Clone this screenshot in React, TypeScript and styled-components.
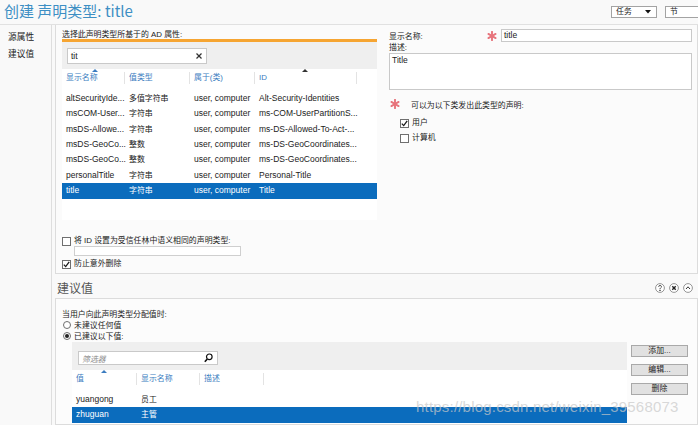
import React from "react";
import styled, { createGlobalStyle } from "styled-components";

const FONT = `"Liberation Sans", "Noto Sans CJK SC", sans-serif`;
const CJK = 7.9;
const LAT = 8.5;

const GlobalStyle = createGlobalStyle`
  html, body { margin: 0; padding: 0; background: #f9f9f9; }
  body { font-family: ${FONT}; color: #222; font-size: ${CJK}px; }
  * { box-sizing: border-box; }
`;

const Page = styled.div`
  position: relative;
  width: 698px;
  height: 425px;
  overflow: hidden;
  display: flex;
  flex-direction: column;
  background: #f9f9f9;
`;

const Header = styled.header`
  display: flex;
  justify-content: space-between;
  align-items: flex-start;
  height: 25px;
  flex-shrink: 0;
  border-bottom: 1px solid #e1e1e1;
`;

const Title = styled.h1`
  margin: 0;
  padding: 1px 0 0 4px;
  font-family: "Noto Sans CJK SC", "Liberation Sans", sans-serif;
  font-size: 15px;
  font-weight: 400;
  line-height: 20px;
  color: #3d8fc4;
`;

const HeaderTools = styled.div`
  display: flex;
  gap: 8px;
  margin: 6px -13px 0 0;
`;

const DropButton = styled.div`
  width: 46px;
  height: 12px;
  display: flex;
  align-items: center;
  justify-content: space-between;
  padding: 0 5px 0 4px;
  border: 1px solid #a3a3a3;
  background: #fff;
  font-size: ${CJK}px;
  line-height: 10px;
`;

const Body = styled.div`
  display: flex;
  flex: 1;
  min-height: 0;
`;

const Nav = styled.nav`
  width: 52px;
  flex-shrink: 0;
  border-right: 1px solid #dedede;
  padding-top: 4px;
`;

const NavItem = styled.div`
  padding-left: 8px;
  font-size: 8.7px;
  line-height: 17px;
  color: #222;
`;

const Main = styled.main`
  flex: 1;
  min-width: 0;
  margin-left: 3px;
  display: flex;
  flex-direction: column;
`;

const TopSection = styled.section`
  display: flex;
  height: 249px;
  flex-shrink: 0;
  border: 1px solid #dcdcdc;
  border-top: none;
  background: #fbfbfb;
`;

const LeftPane = styled.div`
  width: 321px;
  flex-shrink: 0;
  padding: 5px 0 0 6px;
  display: flex;
  flex-direction: column;
`;

const FieldLabel = styled.div`
  font-size: ${CJK}px;
  line-height: 9px;
  height: 9px;
  white-space: nowrap;
`;

const AccentBar = styled.div`
  height: 3px;
  background: #f6a532;
`;

const Toolbar = styled.div<{ $pt: number; $pl: number }>`
  background: #efefef;
  padding: ${(p) => p.$pt}px 0 5px ${(p) => p.$pl}px;
`;

const SearchBox = styled.div<{ $w: number; $h: number }>`
  width: ${(p) => p.$w}px;
  height: ${(p) => p.$h}px;
  display: flex;
  align-items: center;
  justify-content: space-between;
  padding: 0 4px 0 3px;
  border: 1px solid #c9c9c9;
  background: #fff;
`;

const SearchText = styled.span<{ $placeholder?: boolean }>`
  font-size: ${(p) => (p.$placeholder ? CJK : LAT)}px;
  color: ${(p) => (p.$placeholder ? "#8a8a8a" : "#222")};
  font-style: ${(p) => (p.$placeholder ? "italic" : "normal")};
`;

const List = styled.div<{ $h?: number }>`
  background: #fff;
  height: ${(p) => (p.$h ? `${p.$h}px` : "auto")};
  flex: ${(p) => (p.$h ? "none" : "1")};
`;

const HeadRow = styled.div<{ $cols: string }>`
  display: grid;
  grid-template-columns: ${(p) => p.$cols};
  height: 17px;
  padding-top: 1px;
`;

const HeadCell = styled.div<{ $sep?: boolean }>`
  position: relative;
  padding-left: 4px;
  font-size: ${CJK}px;
  line-height: 16px;
  color: #3b7cc0;
  white-space: nowrap;
  &::after {
    content: "";
    display: ${(p) => (p.$sep ? "block" : "none")};
    position: absolute;
    right: 0;
    top: 2px;
    bottom: 2px;
    width: 1px;
    background: #e3e3e3;
  }
`;

const SortMark = styled.span<{ $left: number; $color: string }>`
  position: absolute;
  top: -1px;
  left: ${(p) => p.$left}px;
  width: 0;
  height: 0;
  border-left: 3px solid transparent;
  border-right: 3px solid transparent;
  border-bottom: 3px solid ${(p) => p.$color};
`;

const Rows = styled.div`
  padding-top: 4.8px;
`;

const Row = styled.div<{ $cols: string; $sel?: boolean }>`
  display: grid;
  grid-template-columns: ${(p) => p.$cols};
  height: 15.4px;
  line-height: 15.4px;
  background: ${(p) => (p.$sel ? "#0b6cbd" : "transparent")};
  color: ${(p) => (p.$sel ? "#fff" : "#222")};
`;

const Cell = styled.div<{ $cjk?: boolean }>`
  padding-left: 4px;
  font-size: ${(p) => (p.$cjk ? CJK : LAT)}px;
  white-space: nowrap;
`;

const ChecksBlock = styled.div`
  margin-top: 16px;
  display: flex;
  flex-direction: column;
`;

const CheckRow = styled.label<{ $mt?: number; $indent?: number }>`
  display: flex;
  align-items: center;
  gap: 3px;
  height: 10px;
  margin-top: ${(p) => p.$mt ?? 0}px;
  margin-left: ${(p) => p.$indent ?? 0}px;
  font-size: ${CJK}px;
  line-height: 10px;
  white-space: nowrap;
`;

const Box = styled.span`
  width: 9px;
  height: 9px;
  flex-shrink: 0;
  display: flex;
  align-items: center;
  justify-content: center;
  border: 1px solid #6f6f6f;
  background: #fff;
`;

const SmallInput = styled.div`
  margin: 0 0 0 12px;
  width: 167px;
  height: 10px;
  border: 1px solid #cfcfcf;
  background: #fff;
`;

const RightPane = styled.div`
  flex: 1;
  padding: 4px 5px 0 12px;
  display: flex;
  flex-direction: column;
`;

const NameRow = styled.div`
  display: flex;
  align-items: center;
  height: 13px;
`;

const NameLabel = styled.span`
  width: 98px;
  font-size: ${CJK}px;
`;

const TextBox = styled.div`
  flex: 1;
  height: 13px;
  margin-left: 4px;
  padding-left: 2px;
  border: 1px solid #c9c9c9;
  background: #fff;
  font-size: ${LAT}px;
  line-height: 11px;
`;

const DescLabel = styled.div`
  margin-top: 1px;
  font-size: ${CJK}px;
  line-height: 10px;
`;

const TextArea = styled.div`
  height: 37px;
  padding: 1px 2px;
  border: 1px solid #c9c9c9;
  background: #fff;
  font-size: ${LAT}px;
  line-height: 10px;
`;

const RequiredRow = styled.div`
  display: flex;
  align-items: center;
  gap: 11px;
  height: 10px;
  margin: 9px 0 0 1px;
  font-size: ${CJK}px;
`;

const SectionHeader = styled.div`
  display: flex;
  justify-content: space-between;
  align-items: center;
  height: 24px;
  padding: 4px 5px 0 2px;
  flex-shrink: 0;
`;

const SectionTitle = styled.h2`
  margin: 0;
  font-size: 12px;
  font-weight: 400;
  line-height: 14px;
  color: #555;
  font-family: "Noto Sans CJK SC", "Liberation Sans", sans-serif;
`;

const IconRow = styled.div`
  display: flex;
  gap: 4px;
`;

const BottomBox = styled.section`
  flex: 1;
  border: 1px solid #dcdcdc;
  background: #fcfcfc;
  padding: 11px 0 0 6px;
  display: flex;
  flex-direction: column;
`;

const Prompt = styled.div`
  font-size: ${CJK}px;
  line-height: 9px;
  height: 9px;
`;

const RadioRow = styled.label`
  display: flex;
  align-items: center;
  gap: 3px;
  height: 11px;
  padding-left: 1px;
  font-size: ${CJK}px;
`;

const Radio = styled.span<{ $on?: boolean }>`
  width: 8px;
  height: 8px;
  border-radius: 50%;
  border: 1px solid #6f6f6f;
  background: #fff;
  display: flex;
  align-items: center;
  justify-content: center;
  &::after {
    content: "";
    display: ${(p) => (p.$on ? "block" : "none")};
    width: 4px;
    height: 4px;
    border-radius: 50%;
    background: #222;
  }
`;

const ValuesArea = styled.div`
  display: flex;
  gap: 4px;
  margin: 1px 0 0 10px;
  flex: 1;
`;

const ValuesTable = styled.div`
  width: 555px;
  display: flex;
  flex-direction: column;
`;

const ButtonCol = styled.div`
  display: flex;
  flex-direction: column;
  gap: 7px;
  padding-top: 3px;
  width: 57px;
`;

const ActionButton = styled.button`
  height: 12px;
  padding: 0;
  border: 1px solid #a9a9a9;
  background: #e1e1e1;
  font-family: ${FONT};
  font-size: ${CJK}px;
  line-height: 10px;
  color: #222;
`;

const Watermark = styled.div`
  position: absolute;
  left: 416px;
  top: 398px;
  font-family: "Liberation Sans", sans-serif;
  font-size: 15px;
  line-height: 18px;
  letter-spacing: 0.2px;
  color: rgba(200, 200, 200, 0.7);
  pointer-events: none;
  white-space: nowrap;
`;

const Caret = () => (
  <svg width="6" height="4" viewBox="0 0 6 4">
    <polygon points="0,0 6,0 3,3.5" fill="#111" />
  </svg>
);

const Check = () => (
  <svg width="7" height="7" viewBox="0 0 7 7">
    <path d="M0.8 3.6 L2.7 5.6 L6.2 0.9" stroke="#1a1a1a" strokeWidth="1.3" fill="none" />
  </svg>
);

const Asterisk = () => (
  <svg width="10" height="10" viewBox="0 0 10 10">
    <g stroke="#e7747c" strokeWidth="1.9" strokeLinecap="round">
      <line x1="5" y1="0.8" x2="5" y2="9.2" />
      <line x1="1.4" y1="2.9" x2="8.6" y2="7.1" />
      <line x1="1.4" y1="7.1" x2="8.6" y2="2.9" />
    </g>
  </svg>
);

const ClearX = () => (
  <svg width="6" height="6" viewBox="0 0 6 6">
    <g stroke="#333" strokeWidth="1.2">
      <line x1="0.5" y1="0.5" x2="5.5" y2="5.5" />
      <line x1="5.5" y1="0.5" x2="0.5" y2="5.5" />
    </g>
  </svg>
);

const Magnifier = () => (
  <svg width="9" height="10" viewBox="0 0 9 10">
    <circle cx="5.3" cy="3.8" r="2.8" stroke="#111" strokeWidth="1.2" fill="none" />
    <line x1="3.3" y1="5.9" x2="0.8" y2="8.8" stroke="#111" strokeWidth="1.6" />
  </svg>
);

const CircleIcon = ({ kind }: { kind: "help" | "close" | "up" }) => (
  <svg width="10" height="10" viewBox="0 0 10 10">
    <circle cx="5" cy="5" r="4.4" stroke="#8a8a8a" strokeWidth="0.9" fill="#fff" />
    {kind === "help" && (
      <g fill="none" stroke="#333" strokeWidth="0.9">
        <path d="M3.7 3.8 A1.35 1.35 0 1 1 5.6 5 C5.1 5.3 5 5.6 5 6.2" />
        <circle cx="5" cy="7.4" r="0.35" fill="#333" />
      </g>
    )}
    {kind === "close" && (
      <g stroke="#222" strokeWidth="1.4">
        <line x1="3.3" y1="3.3" x2="6.7" y2="6.7" />
        <line x1="6.7" y1="3.3" x2="3.3" y2="6.7" />
      </g>
    )}
    {kind === "up" && (
      <polyline points="3,6 5,3.8 7,6" fill="none" stroke="#333" strokeWidth="1" />
    )}
  </svg>
);

const TOP_COLS = "63px 65px 65px 102px 1fr";
const BOTTOM_COLS = "65px 63px 64px 1fr";

const attributes = [
  ["altSecurityIde...", "多值字符串", "user, computer", "Alt-Security-Identities"],
  ["msCOM-User...", "字符串", "user, computer", "ms-COM-UserPartitionS..."],
  ["msDS-Allowe...", "字符串", "user, computer", "ms-DS-Allowed-To-Act-..."],
  ["msDS-GeoCo...", "整数", "user, computer", "ms-DS-GeoCoordinates..."],
  ["msDS-GeoCo...", "整数", "user, computer", "ms-DS-GeoCoordinates..."],
  ["personalTitle", "字符串", "user, computer", "Personal-Title"],
  ["title", "字符串", "user, computer", "Title"],
];

const suggested = [
  ["yuangong", "员工", ""],
  ["zhuguan", "主管", ""],
];

export default function App() {
  return (
    <Page>
      <GlobalStyle />
      <Header>
        <Title>创建 声明类型: title</Title>
        <HeaderTools>
          <DropButton>
            任务 <Caret />
          </DropButton>
          <DropButton>
            节 <Caret />
          </DropButton>
        </HeaderTools>
      </Header>
      <Body>
        <Nav>
          <NavItem>源属性</NavItem>
          <NavItem>建议值</NavItem>
        </Nav>
        <Main>
          <TopSection>
            <LeftPane>
              <FieldLabel>选择此声明类型所基于的 AD 属性:</FieldLabel>
              <AccentBar />
              <Toolbar $pt={6} $pl={5}>
                <SearchBox $w={140} $h={16}>
                  <SearchText>tit</SearchText>
                  <ClearX />
                </SearchBox>
              </Toolbar>
              <List $h={151}>
                <HeadRow $cols={TOP_COLS}>
                  <HeadCell $sep>
                    显示名称
                    <SortMark $left={30} $color="#3b7cc0" />
                  </HeadCell>
                  <HeadCell $sep>值类型</HeadCell>
                  <HeadCell $sep>属于(类)</HeadCell>
                  <HeadCell $sep>
                    ID
                    <SortMark $left={47} $color="#333" />
                  </HeadCell>
                  <HeadCell />
                </HeadRow>
                <Rows>
                  {attributes.map((r, i) => (
                    <Row key={i} $cols={TOP_COLS} $sel={i === attributes.length - 1}>
                      {r.map((c, j) => (
                        <Cell key={j} $cjk={j === 1}>
                          {c}
                        </Cell>
                      ))}
                      <Cell />
                    </Row>
                  ))}
                </Rows>
              </List>
              <ChecksBlock>
                <CheckRow>
                  <Box />
                  <span>将 ID 设置为受信任林中语义相同的声明类型:</span>
                </CheckRow>
                <SmallInput />
                <CheckRow $mt={3}>
                  <Box>
                    <Check />
                  </Box>
                  <span>防止意外删除</span>
                </CheckRow>
              </ChecksBlock>
            </LeftPane>
            <RightPane>
              <NameRow>
                <NameLabel>显示名称:</NameLabel>
                <Asterisk />
                <TextBox>title</TextBox>
              </NameRow>
              <DescLabel>描述:</DescLabel>
              <TextArea>Title</TextArea>
              <RequiredRow>
                <Asterisk />
                <span>可以为以下类发出此类型的声明:</span>
              </RequiredRow>
              <CheckRow $mt={9} $indent={11}>
                <Box>
                  <Check />
                </Box>
                <span>用户</span>
              </CheckRow>
              <CheckRow $mt={5} $indent={11}>
                <Box />
                <span>计算机</span>
              </CheckRow>
            </RightPane>
          </TopSection>
          <SectionHeader>
            <SectionTitle>建议值</SectionTitle>
            <IconRow>
              <CircleIcon kind="help" />
              <CircleIcon kind="close" />
              <CircleIcon kind="up" />
            </IconRow>
          </SectionHeader>
          <BottomBox>
            <Prompt>当用户向此声明类型分配值时:</Prompt>
            <RadioRow>
              <Radio />
              <span>未建议任何值</span>
            </RadioRow>
            <RadioRow>
              <Radio $on />
              <span>已建议以下值:</span>
            </RadioRow>
            <ValuesArea>
              <ValuesTable>
                <Toolbar $pt={9} $pl={6}>
                  <SearchBox $w={140} $h={14}>
                    <SearchText $placeholder>筛选器</SearchText>
                    <Magnifier />
                  </SearchBox>
                </Toolbar>
                <List>
                  <HeadRow $cols={BOTTOM_COLS}>
                    <HeadCell $sep>
                      值
                      <SortMark $left={29} $color="#3b7cc0" />
                    </HeadCell>
                    <HeadCell $sep>显示名称</HeadCell>
                    <HeadCell $sep>描述</HeadCell>
                    <HeadCell />
                  </HeadRow>
                  <Rows>
                    {suggested.map((r, i) => (
                      <Row key={i} $cols={BOTTOM_COLS} $sel={i === 1}>
                        {r.map((c, j) => (
                          <Cell key={j} $cjk={j === 1}>
                            {c}
                          </Cell>
                        ))}
                        <Cell />
                      </Row>
                    ))}
                  </Rows>
                </List>
              </ValuesTable>
              <ButtonCol>
                <ActionButton>添加...</ActionButton>
                <ActionButton>编辑...</ActionButton>
                <ActionButton>删除</ActionButton>
              </ButtonCol>
            </ValuesArea>
          </BottomBox>
        </Main>
      </Body>
      <Watermark>https://blog.csdn.net/weixin_39568073</Watermark>
    </Page>
  );
}
